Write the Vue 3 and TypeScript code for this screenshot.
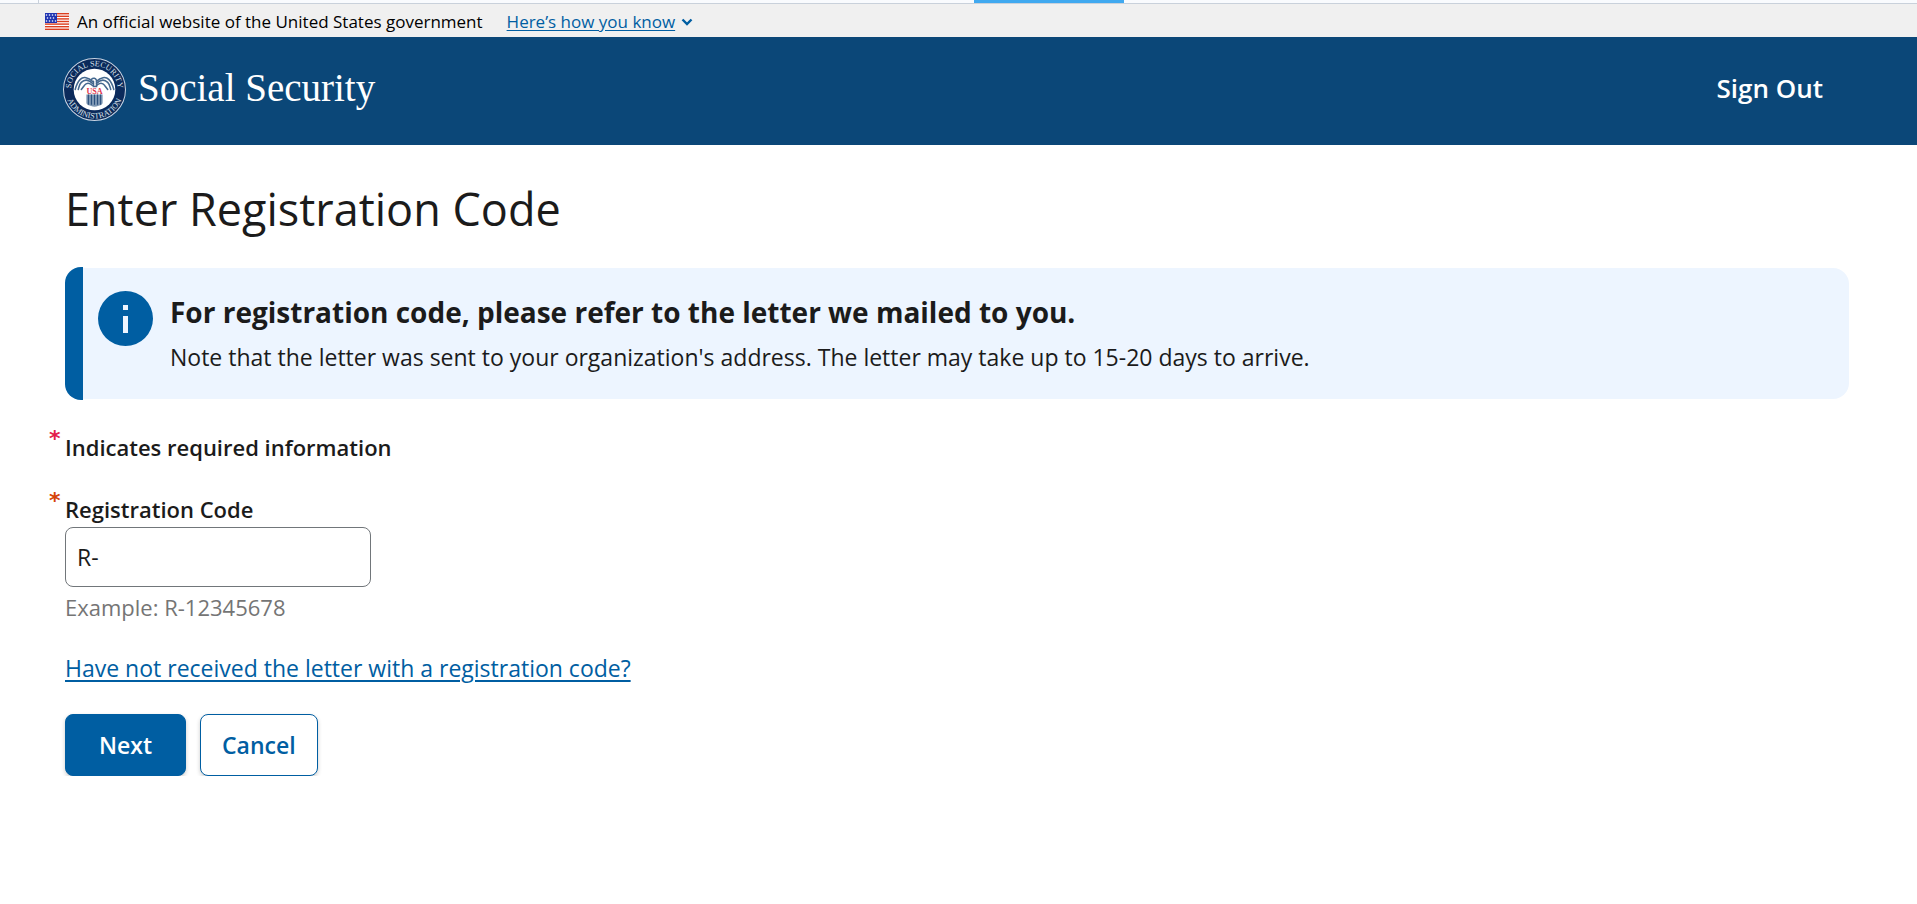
<script setup lang="ts">
import { ref } from 'vue'

const registrationCode = ref<string>('R-')
const stripes: number[] = [0, 1, 2, 3, 4, 5, 6]
const starRows: number[][] = [
  [2, 5, 8, 11],
  [3, 6, 9],
  [2, 5, 8, 11],
]
const seamLines: number[] = [25, 28, 31, 34, 37]
</script>

<template>
  <div class="page">
    <div class="tab-strip" aria-hidden="true">
      <span class="strip-edge"></span>
      <span class="active-tab"></span>
    </div>

    <section class="gov-banner" aria-label="Official website of the United States government">
      <svg class="flag" viewBox="0 0 24 17" aria-hidden="true">
        <rect width="24" height="17" fill="#fff" />
        <rect v-for="n in stripes" :key="n" x="0" :y="n * 2.6" width="24" height="1.4" fill="#db3e1f" />
        <rect width="12" height="10" fill="#1e33b1" />
        <template v-for="(row, r) in starRows" :key="r">
          <circle v-for="x in row" :key="x" :cx="x - 0.5" :cy="2 + r * 3" r="0.8" fill="#fff" />
        </template>
      </svg>
      <span class="banner-text">An official website of the United States government</span>
      <a href="#" class="banner-link"><span>Here’s how you know</span>
        <svg class="chevron" viewBox="0 0 12 8" aria-hidden="true">
          <path d="M1.500 1.500 6 6l4.500-4.500" fill="none" stroke="#005ea2" stroke-width="2.400" />
        </svg>
      </a>
    </section>

    <header class="site-header">
      <a href="#" class="brand">
        <svg class="seal" viewBox="0 0 62 62" aria-hidden="true">
          <defs>
            <path id="seal-top" d="M8 31a23 23 0 0 1 46 0" />
            <path id="seal-bottom" d="M2.500 31a28.500 28.500 0 0 0 57 0" />
          </defs>
          <circle cx="31" cy="31" r="30.500" fill="#0b2a5b" stroke="#c7d3e2" />
          <circle cx="31" cy="31" r="20.500" fill="#fff" />
          <text class="seal-text"><textPath href="#seal-top" startOffset="50%" text-anchor="middle">SOCIAL SECURITY</textPath></text>
          <text class="seal-text"><textPath href="#seal-bottom" startOffset="50%" text-anchor="middle">ADMINISTRATION</textPath></text>
          <g fill="none" stroke="#44688f" stroke-width="1.500" stroke-linecap="round">
            <path d="M29 23c-4-4-9-5-12-2-3 3-4 6-5 10" />
            <path d="M29 25c-4-4-8-4-11-1-2 2-2 4-3 7" />
            <path d="M29 27c-3-3-6-3-8 0l-3 4" />
            <path d="M33 23c4-4 9-5 12-2 3 3 4 6 5 10" />
            <path d="M33 25c4-4 8-4 11-1 2 2 2 4 3 7" />
            <path d="M33 27c3-3 6-3 8 0l3 4" />
            <path d="M28 21c2-2 4-1 5 1v6h-3v-5" />
          </g>
          <path d="M23 36h16v8c0 2-3 3-8 4-5-1-8-2-8-4z" fill="#7d96b2" />
          <path v-for="x in seamLines" :key="x" :d="`M${x} 36v10`" stroke="#294e7c" stroke-width="1" />
          <text x="31" y="35" class="seal-usa" text-anchor="middle">USA</text>
        </svg>
        <span class="brand-name">Social Security</span>
      </a>
      <button type="button" class="sign-out">Sign Out</button>
    </header>

    <main class="content">
      <h1>Enter Registration Code</h1>

      <section class="alert">
        <div class="alert-panel">
          <svg class="info-icon" viewBox="0 0 55 55" aria-hidden="true">
            <circle cx="27.500" cy="27.500" r="27.500" fill="#005ea2" />
            <path d="M25 14h5v5h-5zM25 25h5v17h-5z" fill="#edf5ff" />
          </svg>
          <div class="alert-body">
            <h2>For registration code, please refer to the letter we mailed to you.</h2>
            <p>Note that the letter was sent to your organization's address. The letter may take up to 15-20 days to arrive.</p>
          </div>
        </div>
      </section>

      <form @submit.prevent>
        <p class="required-note"><span class="star">*</span>Indicates required information</p>
        <label for="registration-code" class="field-label"><span class="star star-field">*</span>Registration Code</label>
        <input id="registration-code" v-model="registrationCode" type="text" aria-describedby="code-hint" />
        <p id="code-hint" class="hint">Example: R-12345678</p>
        <a href="#" class="help-link">Have not received the letter with a registration code?</a>
        <div class="actions">
          <button type="submit" class="btn primary">Next</button>
          <button type="button" class="btn secondary">Cancel</button>
        </div>
      </form>
    </main>
  </div>
</template>

<style>
body {
  margin: 0;
  background: #fff;
}
</style>

<style scoped>
.page {
  color: #1b1b1b;
  font-family: "Open Sans", "Noto Sans", sans-serif;
  font-size: 23px;
  line-height: 32px;
}

.tab-strip {
  display: grid;
  grid-template-columns: 39px 1fr 150px 793px;
  height: 3px;
  background: #f9fbfe;
  border-bottom: 1px solid #c9d1db;
}

.strip-edge {
  border-right: 1px solid #c9d1db;
}

.active-tab {
  grid-column: 3;
  background: #40a9f0;
}

.gov-banner {
  display: flex;
  align-items: center;
  box-sizing: border-box;
  height: 33px;
  padding: 2px 0 0 45px;
  background: #f0f0f0;
  color: #000;
  font-size: 17px;
  line-height: 24px;
}

.flag {
  width: 24px;
  height: 17px;
  margin-right: 8px;
}

.banner-link {
  display: flex;
  align-items: center;
  gap: 6px;
  margin-left: 24px;
  color: #005ea2;
  text-decoration: none;
}

.banner-link span {
  text-decoration: underline;
  text-underline-offset: 2px;
}

.chevron {
  width: 12px;
  height: 8px;
}

.site-header {
  display: flex;
  align-items: center;
  justify-content: space-between;
  box-sizing: border-box;
  height: 108px;
  padding: 0 94px 4px 63px;
  background: #0b4778;
}

.brand {
  display: flex;
  align-items: center;
  gap: 12px;
  color: #fff;
  text-decoration: none;
}

.seal {
  width: 63px;
  height: 63px;
}

.seal-text {
  fill: #d7e0ea;
  font-family: "Liberation Serif", serif;
  font-size: 8px;
}

.seal-usa {
  fill: #e0334b;
  font-family: "Liberation Serif", serif;
  font-size: 8px;
  font-weight: 700;
}

.brand-name {
  padding-bottom: 2px;
  font-family: Georgia, "Liberation Serif", serif;
  font-size: 39px;
  line-height: 44px;
}

button {
  font-family: inherit;
  font-weight: 600;
  cursor: pointer;
}

.sign-out {
  padding: 0 0 2px;
  border: 0;
  background: none;
  color: #fff;
  font-size: 26px;
  line-height: 36px;
}

.content {
  padding: 32px 68px 0 65px;
}

h1 {
  margin: 0;
  font-size: 45px;
  font-weight: 400;
  line-height: 64px;
}

.alert {
  margin-top: 26px;
  border-left: 18px solid #005ea2;
  border-radius: 16px;
  padding: 1px 0;
}

.alert-panel {
  display: flex;
  gap: 17px;
  box-sizing: border-box;
  min-height: 131px;
  padding: 23px 15px;
  border-radius: 0 16px 16px 0;
  background: #edf5ff;
}

.info-icon {
  flex: none;
  width: 55px;
  height: 55px;
}

h2 {
  margin: 0;
  font-size: 28px;
  font-weight: 700;
  line-height: 42px;
}

.alert p {
  margin: 8px 0 0;
}

.required-note {
  position: relative;
  margin: 31px 0 0;
  font-size: 22px;
  font-weight: 600;
}

.field-label {
  position: relative;
  display: block;
  margin-top: 30px;
  font-size: 22px;
  font-weight: 600;
}

.star {
  position: absolute;
  top: -8px;
  left: -16px;
  color: #e31c4b;
  font-family: "DejaVu Sans", sans-serif;
  font-weight: 700;
}

.star-field {
  color: #d54309;
}

input {
  display: block;
  box-sizing: border-box;
  width: 306px;
  height: 60px;
  margin-top: 2px;
  padding: 0 11px;
  border: 1px solid #71767a;
  border-radius: 8px;
  color: #1b1b1b;
  font: inherit;
}

.hint {
  margin: 4px 0 0;
  color: #757575;
  font-size: 22px;
}

.help-link {
  display: inline-block;
  margin-top: 29px;
  color: #005ea2;
  text-decoration-thickness: 2px;
  text-underline-offset: 3px;
}

.actions {
  display: flex;
  gap: 14px;
  margin-top: 30px;
}

.btn {
  height: 62px;
  border: 1px solid #005ea2;
  border-radius: 8px;
  box-shadow: 0 2px 4px rgba(0, 0, 0, 0.2);
  font-size: 23px;
}

.primary {
  padding: 0 33px;
  background: #005ea2;
  color: #fff;
}

.secondary {
  padding: 0 21px;
  background: #fff;
  color: #005ea2;
}
</style>
